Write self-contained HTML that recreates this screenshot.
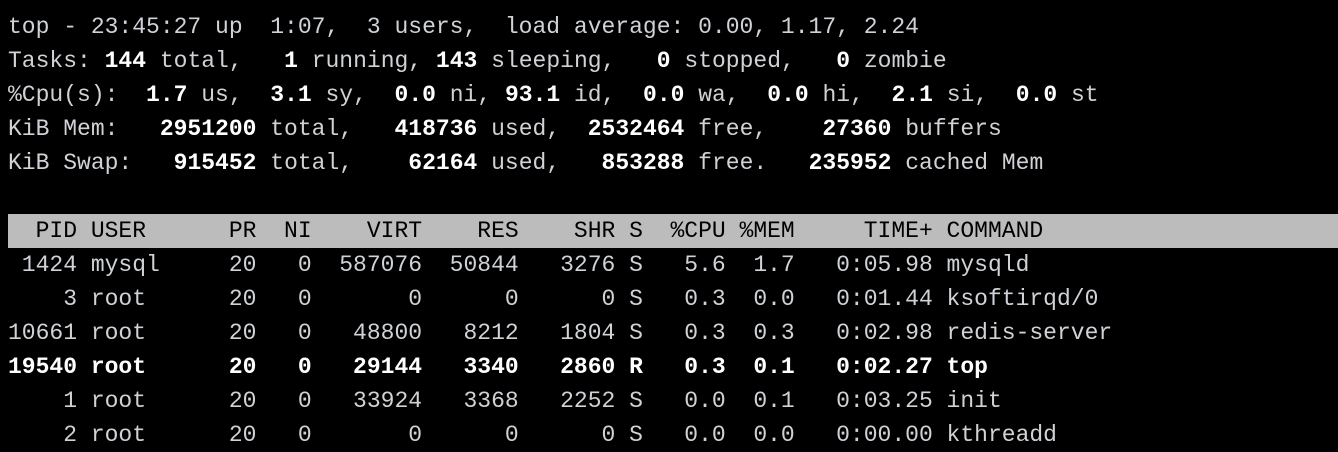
<!DOCTYPE html>
<html><head><style>
html,body{margin:0;padding:0;background:#000;width:1338px;height:428px;overflow:hidden}
pre{margin:0;position:absolute;left:8px;top:10px;font-family:"Liberation Mono",monospace;font-size:23px;line-height:34px;color:#cfd2d6;white-space:pre}
b{color:#fff;font-weight:bold}
.bar{background:#bcbcbc;color:#000;display:inline-block;width:1330px}
</style></head><body>
<pre>top - 23:45:27 up  1:07,  3 users,  load average: 0.00, 1.17, 2.24
Tasks: <b>144</b> total,   <b>1</b> running, <b>143</b> sleeping,   <b>0</b> stopped,   <b>0</b> zombie
%Cpu(s):  <b>1.7</b> us,  <b>3.1</b> sy,  <b>0.0</b> ni, <b>93.1</b> id,  <b>0.0</b> wa,  <b>0.0</b> hi,  <b>2.1</b> si,  <b>0.0</b> st
KiB Mem:   <b>2951200</b> total,   <b>418736</b> used,  <b>2532464</b> free,    <b>27360</b> buffers
KiB Swap:   <b>915452</b> total,    <b>62164</b> used,   <b>853288</b> free.   <b>235952</b> cached Mem

<span class="bar">  PID USER      PR  NI    VIRT    RES    SHR S  %CPU %MEM     TIME+ COMMAND</span>
 1424 mysql     20   0  587076  50844   3276 S   5.6  1.7   0:05.98 mysqld
    3 root      20   0       0      0      0 S   0.3  0.0   0:01.44 ksoftirqd/0
10661 root      20   0   48800   8212   1804 S   0.3  0.3   0:02.98 redis-server
<b>19540 root      20   0   29144   3340   2860 R   0.3  0.1   0:02.27 top</b>
    1 root      20   0   33924   3368   2252 S   0.0  0.1   0:03.25 init
    2 root      20   0       0      0      0 S   0.0  0.0   0:00.00 kthreadd</pre>
</body></html>
